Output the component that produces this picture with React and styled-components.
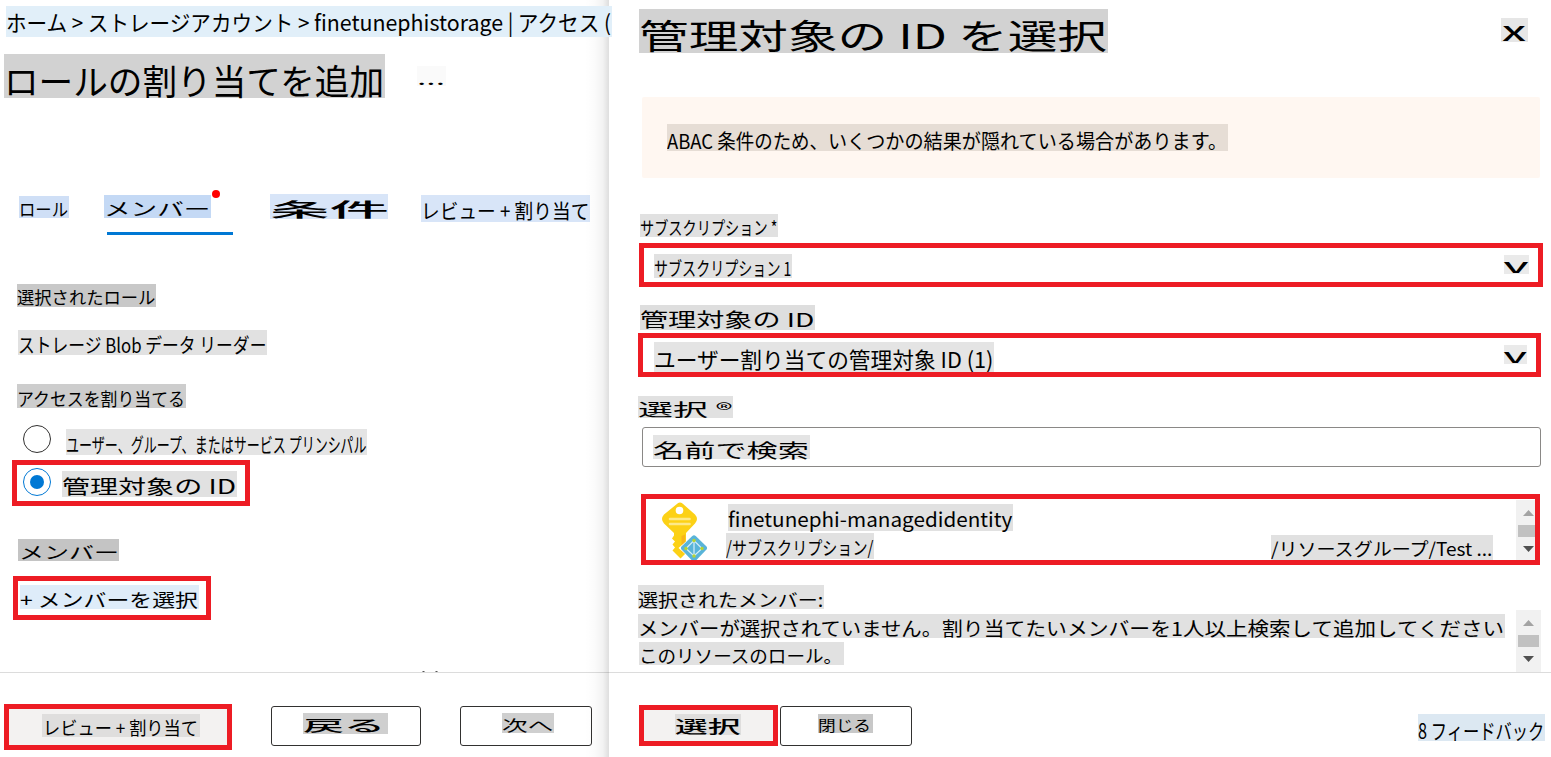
import React, { useLayoutEffect, useRef, useState } from "react";
import styled, { createGlobalStyle } from "styled-components";

const GlobalStyle = createGlobalStyle`
  * { box-sizing: border-box; }
  body {
    margin: 0;
    background: #fff;
    color: #000;
    font-family: "Noto Sans CJK JP", "Noto Sans", sans-serif;
    overflow: hidden;
  }
`;

const RED = "#ed1c24";
const BLUE = "#0078d4";

/* ---------- text ---------- */

const LabelBox = styled.div`
  display: flex;
  flex: none;
  width: ${(p) => p.$w}px;
  height: ${(p) => p.$h}px;
  margin: ${(p) => p.$mt || 0}px 0 0 ${(p) => p.$ml || 0}px;
  padding-left: ${(p) => p.$inset || 0}px;
  background: ${(p) => p.$bg || "#e1e1e1"};
  font-size: ${(p) => p.$size}px;
  font-weight: ${(p) => p.$weight || 400};
  /* the CJK face puts its baseline 0.436em under the middle of the line */
  line-height: ${(p) => 2 * (p.$base - 0.436 * p.$size)}px;
  text-align: left;
  white-space: pre;
`;

const Segment = styled.span`
  flex: none;
  width: ${(p) => p.$w}px;
`;

const Stretch = styled.span`
  display: inline-block;
  transform-origin: 0 50%;
  vertical-align: top;
`;

function Fit({ width, text }) {
  const ref = useRef(null);
  const [scale, setScale] = useState(1);
  useLayoutEffect(() => {
    setScale(width / parseFloat(getComputedStyle(ref.current).width));
  }, [width, text]);
  return (
    <Segment $w={width}>
      <Stretch ref={ref} style={{ transform: `scaleX(${scale})` }}>
        {text}
      </Stretch>
    </Segment>
  );
}

function Label({ w, h, mt, ml, bg, size, base, weight, inset = 0, fit, parts, children, as }) {
  const segments = parts || [[children, fit || w - inset - 0.6]];
  return (
    <LabelBox as={as} $w={w} $h={h} $mt={mt} $ml={ml} $bg={bg} $size={size} $base={base} $weight={weight} $inset={inset}>
      {segments.map(([text, width]) => (
        <Fit key={text} text={text} width={width} />
      ))}
    </LabelBox>
  );
}

/* ---------- page ---------- */

const Page = styled.div`
  display: flex;
  width: 1551px;
  height: 757px;
  overflow: hidden;
`;

const Column = styled.div`
  display: flex;
  flex-direction: column;
  flex: none;
  width: ${(p) => p.$w}px;
  height: 757px;
`;

const Panel = styled(Column)`
  position: relative;
  background: #fff;
  &::before {
    content: "";
    position: absolute;
    top: 0;
    bottom: 0;
    left: -24px;
    width: 24px;
    background: linear-gradient(
      to right,
      rgba(0, 0, 0, 0),
      rgba(0, 0, 0, 0.015) 40%,
      rgba(0, 0, 0, 0.05) 75%,
      rgba(0, 0, 0, 0.13)
    );
  }
`;

const Body = styled.div`
  display: flex;
  flex-direction: column;
  align-items: flex-start;
  height: 672px;
  padding-top: ${(p) => p.$pt}px;
`;

const Footer = styled.div`
  display: flex;
  align-items: flex-start;
  height: 85px;
  border-top: 1px solid #dcdcdc;
  padding-left: ${(p) => p.$pl}px;
`;

const Row = styled.div`
  display: flex;
  align-items: flex-start;
`;

const Crumbs = styled.div`
  position: relative;
  z-index: 2;
`;

const Tabs = styled.div`
  display: flex;
  align-items: flex-start;
  height: 42px;
  margin: 95px 0 0 19px;
`;

const ActiveTab = styled.div`
  position: relative;
  width: 129px;
  height: 42px;
  margin-left: 35px;
`;

const Underline = styled.div`
  width: 126px;
  height: 3px;
  margin: 14px 0 0 3px;
  background: ${BLUE};
`;

const Dot = styled.div`
  position: absolute;
  left: 108px;
  top: -3px;
  width: 8px;
  height: 8px;
  border-radius: 50%;
  background: #f00;
`;

const Highlight = styled.div`
  display: flex;
  align-items: flex-start;
  flex: none;
  width: ${(p) => p.$w}px;
  height: ${(p) => p.$h}px;
  margin: ${(p) => p.$mt || 0}px 0 0 ${(p) => p.$ml || 0}px;
  border: 5px solid ${RED};
  background: ${(p) => p.$bg || "#fff"};
  overflow: hidden;
`;

const Button = styled.button`
  display: flex;
  align-items: flex-start;
  flex: none;
  width: ${(p) => p.$w}px;
  height: 40px;
  margin: 33px 0 0 ${(p) => p.$ml}px;
  padding: 0;
  border: 1px solid #323130;
  border-radius: 3px;
  background: #fff;
  color: #000;
  font-family: inherit;
`;

const RadioRing = styled.span`
  display: flex;
  align-items: center;
  justify-content: center;
  flex: none;
  width: 28px;
  height: 28px;
  margin: ${(p) => p.$mt}px 0 0 ${(p) => p.$ml}px;
  border: 1px solid ${(p) => (p.$on ? BLUE : "#323130")};
  border-radius: 50%;
  &::after {
    content: "";
    width: 14px;
    height: 14px;
    border-radius: 50%;
    background: ${(p) => (p.$on ? BLUE : "transparent")};
  }
`;

const Specks = styled.svg`
  display: block;
  margin: auto 0 0 421px;
`;

const Notice = styled.div`
  width: 898px;
  height: 81px;
  margin: 44px 0 0 33px;
  border-radius: 2px;
  background: #fff7f1;
  display: flex;
  align-items: flex-start;
`;

const SearchBox = styled.div`
  width: 899px;
  height: 40px;
  margin: 9px 0 0 33px;
  border: 1px solid #8a8886;
  border-radius: 3px;
  display: flex;
  align-items: flex-start;
`;

const Lines = styled.div`
  display: flex;
  flex-direction: column;
  width: ${(p) => p.$w}px;
  margin-left: ${(p) => p.$ml}px;
  flex: none;
`;

const Track = styled.div`
  display: flex;
  flex-direction: column;
  flex: none;
  width: 25px;
  height: ${(p) => p.$h}px;
  margin: ${(p) => p.$mt || 0}px 0 0 ${(p) => p.$ml}px;
  padding: 10px 2px 0;
  background: #f1f1f1;
`;

const Thumb = styled.div`
  height: 12px;
  margin: 9px 0;
  background: #c1c1c1;
`;

const Arrow = styled.svg`
  display: block;
  margin-left: 5px;
`;

function Scrollbar({ h, mt, ml }) {
  return (
    <Track $h={h} $mt={mt} $ml={ml}>
      <Arrow width="11" height="6" viewBox="0 0 11 6">
        <path d="M0 6 L5.5 0 L11 6Z" fill="#a3a3a3" />
      </Arrow>
      <Thumb />
      <Arrow width="11" height="6" viewBox="0 0 11 6">
        <path d="M0 0 L5.5 6 L11 0Z" fill="#505050" />
      </Arrow>
    </Track>
  );
}

const KeySvg = styled.svg`
  display: block;
  flex: none;
  margin: 3px 0 0 15px;
`;

function KeyIcon() {
  return (
    <KeySvg width="48" height="60" viewBox="0 0 48 60">
      <path
        d="M16.5 1.5 Q19 -.5 21.5 1.5 L34 12.500 Q38 17 34 21.500 L25 31 V51 L19.500 56.500 L11.500 48.500 L14 45.500 L11.500 42.500 L14 39.500 L11 36.500 L13 33.500 V31 L3 21.500 Q-1 17 3 12.500Z"
        fill="#fcd116"
      />
      <path d="M20.500 34 L24 32.500 V48 L20.500 51Z" fill="#f8b51b" />
      <circle cx="18.500" cy="8.500" r="3.800" fill="#fff" />
      <path d="M9 17H28.500M9 22H28.500" stroke="#fde98a" strokeWidth="2.600" strokeLinecap="round" />
      <path d="M33 32.500 L48 46 L33 60 L17.500 46Z" fill="#fff" />
      <path d="M31.300 34 Q33 32.500 34.700 34 L45.500 44.500 Q46.700 46 45.500 47.500 L35 58.500 H31 L20.500 47.500 Q19.300 46 20.500 44.500Z" fill="#59b4d9" />
      <path d="M33 38.500V55M33 38.500L25 46.500L33 54L41 46.500Z" stroke="#d6eef8" strokeWidth="1.200" fill="none" />
      <circle cx="33" cy="38.500" r="1.700" fill="#b8d432" />
      <circle cx="25" cy="46.500" r="1.700" fill="#b8d432" />
      <circle cx="41" cy="46.500" r="1.700" fill="#b8d432" />
      <circle cx="33" cy="54" r="1.700" fill="#b8d432" />
    </KeySvg>
  );
}

export default function App() {
  return (
    <>
      <GlobalStyle />
      <Page>
        <Column $w={609}>
          <Body $pt={6}>
            <Crumbs>
              <Label
                w={606}
                h={31}
                ml={6}
                bg="#e1eff9"
                size={22}
                base={25.5}
                parts={[
                  ["ホーム > ストレージアカウント > ", 308],
                  ["finetunephistorage", 189],
                  [" | アクセス (", 108],
                ]}
              />
            </Crumbs>
            <Row>
              <Label as="h1" w={381} h={44} mt={17} ml={4} bg="#d2d2d2" size={35} base={41.5} fit={380}>
                ロールの割り当てを追加
              </Label>
              <Label w={29} h={20} mt={29} ml={32} bg="#fafafa" size={17} base={19} fit={28}>
                ...
              </Label>
            </Row>
            <Tabs>
              <Label w={50} h={22} mt={3} bg="#cfdff6" size={17.5} base={21} fit={49}>
                ロール
              </Label>
              <ActiveTab>
                <Label w={107} h={23} mt={2} bg="#c4d9f5" size={18} base={21.3}>
                  メンバー
                </Label>
                <Underline />
                <Dot />
              </ActiveTab>
              <Label w={118} h={25} mt={1} ml={37} bg="#d8e5f8" size={19.5} base={23} weight={500} fit={119}>
                条件
              </Label>
              <Label w={169} h={27} mt={2} ml={33} bg="#d8e5f8" size={20.5} base={24}>
                レビュー + 割り当て
              </Label>
            </Tabs>
            <Label w={139} h={23} mt={49} ml={17} bg="#c8c8c8" size={17.5} base={21}>
              選択されたロール
            </Label>
            <Label w={249} h={25} mt={23} ml={18} size={20} base={24}>
              ストレージ Blob データ リーダー
            </Label>
            <Label w={169} h={24} mt={29} ml={17} bg="#cdcdcd" size={18.3} base={22} fit={168}>
              アクセスを割り当てる
            </Label>
            <Row>
              <RadioRing $mt={17} $ml={23} />
              <Label w={301} h={26} mt={21} ml={15} size={20} base={25} bg="#e4e4e4">
                ユーザー、グループ、またはサービス プリンシパル
              </Label>
            </Row>
            <Highlight $w={238} $h={46} $mt={5} $ml={12}>
              <RadioRing $on $mt={3} $ml={6} />
              <Label w={175} h={26} mt={6} ml={11} size={19.5} base={23.5} fit={174}>
                管理対象の ID
              </Label>
            </Highlight>
            <Label w={101} h={22} mt={33} ml={18} bg="#c4c4c4" size={17} base={20} inset={1} fit={100}>
              メンバー
            </Label>
            <Highlight $w={198} $h={44} $mt={15} $ml={13}>
              <Label w={179} h={24} mt={4} ml={2} bg="#deecf9" size={18.5} base={22.8} fit={178}>
                + メンバーを選択
              </Label>
            </Highlight>
            <Specks width="20" height="2" viewBox="0 0 20 2">
              <path d="M1.500 1.500h2M14.500 1.500h2" stroke="#555" />
            </Specks>
          </Body>
          <Footer $pl={4}>
            <Highlight $w={228} $h={46} $mt={31} $bg="#f3f2f1">
              <Label w={158} h={23} mt={5} ml={33} size={18.5} base={22} bg="#dfdedd" inset={1} fit={155}>
                レビュー + 割り当て
              </Label>
            </Highlight>
            <Button $w={150} $ml={39}>
              <Label w={85} h={21} mt={6} ml={31} bg="#cfcfcf" size={15} base={19} fit={82} weight={500}>
                戻る
              </Label>
            </Button>
            <Button $w={132} $ml={39}>
              <Label w={52} h={20} mt={6} ml={41} bg="#cfcfcf" size={15} base={18.7}>
                次へ
              </Label>
            </Button>
          </Footer>
        </Column>

        <Panel $w={942}>
          <Body $pt={9}>
            <Row>
              <Label as="h2" w={469} h={44} ml={30} bg="#d2d2d2" size={34} base={40.5} fit={468}>
                管理対象の ID を選択
              </Label>
              <Label w={27} h={24} mt={9} ml={393} bg="#e6e6e6" size={20} base={23.5} inset={1} fit={24} weight={500}>
                X
              </Label>
            </Row>
            <Notice>
              <Label
                w={561}
                h={27}
                mt={27}
                ml={25}
                bg="#e6ddd5"
                size={20}
                base={25.3}
                parts={[
                  ["ABAC 条件のため、", 161],
                  ["いくつかの結果が隠れている場合があります。", 399],
                ]}
              />
            </Notice>
            <Label w={138} h={23} mt={36} ml={31} size={18.5} base={22}>
              サブスクリプション *
            </Label>
            <Highlight $w={904} $h={44} $mt={6} $ml={30}>
              <Label w={138} h={24} mt={6} ml={10} size={19} base={22.5}>
                サブスクリプション 1
              </Label>
              <Label w={25} h={19} mt={7} ml={712} size={15} base={18.5} bg="#eaeaea" fit={24} weight={500}>
                V
              </Label>
            </Highlight>
            <Label w={175} h={25} mt={18} ml={31} bg="#dedede" size={19.2} base={23}>
              管理対象の ID
            </Label>
            <Highlight $w={903} $h={44} $mt={3} $ml={29}>
              <Label w={340} h={30} mt={4} ml={11} size={22} base={25.8} bg="#e4e4e4">
                ユーザー割り当ての管理対象 ID (1)
              </Label>
              <Label w={23} h={19} mt={7} ml={510} size={15} base={18.5} bg="#eaeaea" weight={500}>
                V
              </Label>
            </Highlight>
            <Label w={95} h={22} mt={19} ml={29} size={17} base={20}>
              選択 ®
            </Label>
            <SearchBox>
              <Label w={157} h={24} mt={7} ml={10} size={19.5} base={23} bg="#e4e4e4" fit={156}>
                名前で検索
              </Label>
            </SearchBox>
            <Highlight $w={899} $h={71} $mt={27} $ml={32}>
              <KeyIcon />
              <Lines $w={148} $ml={17}>
                <Label w={285} h={27} mt={5} ml={2} size={20} base={23.5}>
                  finetunephi-managedidentity
                </Label>
                <Label w={148} h={26} mt={2} size={18.5} base={22.8}>
                  /サブスクリプション/
                </Label>
              </Lines>
              <Label w={222} h={25} mt={36} ml={397} size={18} base={21.5}>
                /リソースグループ/Test ...
              </Label>
              <Scrollbar h={60} mt={1} ml={23} />
            </Highlight>
            <Row>
              <Lines $w={867} $ml={29}>
                <Label w={186} h={24} mt={20} size={18} base={22}>
                  選択されたメンバー:
                </Label>
                <Label
                  w={867}
                  h={24}
                  mt={5}
                  size={19}
                  base={22.5}
                  parts={[
                    ["メンバーが選択されていません。", 304],
                    ["割り当てたいメンバーを", 229],
                    ["1人以上検索して追加してください", 333],
                  ]}
                />
                <Label w={205} h={23} mt={4} ml={1} size={18} base={21.5} fit={203}>
                  このリソースのロール。
                </Label>
              </Lines>
              <Scrollbar h={62} mt={45} ml={11} />
            </Row>
          </Body>
          <Footer $pl={30}>
            <Highlight $w={139} $h={41} $mt={32} $bg="#f3f2f1">
              <Label w={66} h={21} mt={4} ml={31} size={16.5} base={19.3} bg="#dfdedd" weight={500}>
                選択
              </Label>
            </Highlight>
            <Button $w={132} $ml={2}>
              <Label w={55} h={19} mt={7} ml={37} bg="#c8c8c8" size={14.5} base={17.5} fit={53}>
                閉じる
              </Label>
            </Button>
            <Label w={127} h={27} mt={41} ml={506} bg="#dce8f2" size={21} base={25.3}>
              8 フィードバック
            </Label>
          </Footer>
        </Panel>
      </Page>
    </>
  );
}
